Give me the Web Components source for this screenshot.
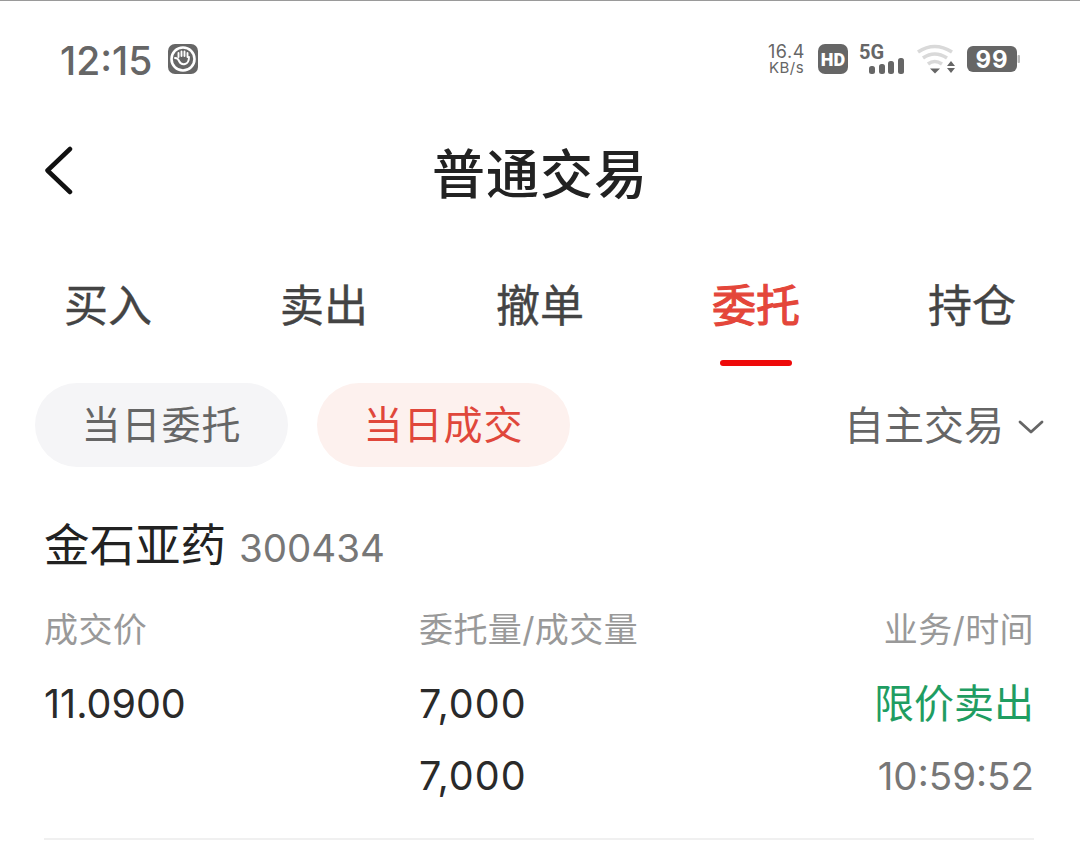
<!DOCTYPE html>
<html lang="zh">
<head>
<meta charset="utf-8">
<title>普通交易</title>
<style>
  html, body { margin: 0; padding: 0; background: #fff; }
  body { width: 1080px; height: 862px; overflow: hidden; font-family: Inter, "Noto Sans CJK SC", sans-serif; }
</style>
</head>
<body>
<trade-page></trade-page>
<script>
// Status bar with clock and the indicator icons
class StatusBar extends HTMLElement {
    constructor() {
        super();
        this.attachShadow({ mode: 'open' });
    }

    connectedCallback() {
        this.shadowRoot.innerHTML = `
            <style>
                :host { display: flex; align-items: center; height: 119px; box-sizing: border-box; padding: 0 60px; border-top: 1px solid #9a9a9a; color: #666; }
                .time { font: 500 39px/1 Inter, sans-serif; }
                .hand { margin: -2px 0 0 16px; }
                .right { margin: -2px 0 0 auto; display: flex; align-items: center; }
                .speed { font: 400 18px/16px Inter, sans-serif; text-align: center; width: 39px; margin-top: 2px; letter-spacing: .6px; }
                .speed div:last-child { font-size: 15px; letter-spacing: .5px; }
                svg { display: block; }
                .hd { margin-left: 12px; }
                .sig { margin-left: 11px; position: relative; width: 45px; height: 30px; }
                .sig span { position: absolute; left: 0; top: 0; font: 700 20px/17px Roboto, sans-serif; }
                .wifi { margin-left: 13px; }
                .bat { margin-left: 12px; }
            </style>
            <span class="time">12:15</span>
            <svg class="hand" width="30" height="30" viewBox="0 0 30 30">
                <rect x="0" y="0" width="30" height="30" rx="7" fill="#666"/>
                <circle cx="15" cy="15" r="11.5" fill="none" stroke="#fff" stroke-width="2.6"/>
                <path d="M10.500 13V9M13.500 12V7.500M16.500 12V7.500M19.500 13V9M7 14q3 0 4 3q2 4 6 3q4-1 4-7" fill="none" stroke="#fff" stroke-width="1.900" stroke-linecap="round"/>
            </svg>
            <div class="right">
                <div class="speed"><div>16.4</div><div>KB/s</div></div>
                <svg class="hd" width="30" height="30" viewBox="0 0 30 30">
                    <rect width="30" height="30" rx="7" fill="#666"/>
                    <text x="15" y="21.500" text-anchor="middle" font-family="Roboto, sans-serif" font-weight="900" font-size="18" fill="#fff">HD</text>
                </svg>
                <div class="sig">
                    <svg width="45" height="30" viewBox="0 0 45 30">
                        <rect x="10" y="22" width="6" height="8" rx="2.500" fill="#666"/>
                        <rect x="20" y="20" width="6" height="10" rx="2.500" fill="#666"/>
                        <rect x="29" y="17" width="6" height="13" rx="2.500" fill="#666"/>
                        <rect x="39" y="14" width="6" height="16" rx="2.500" fill="#666"/>
                    </svg>
                    <span>5G</span>
                </div>
                <svg class="wifi" width="38" height="30" viewBox="0 0 38 30">
                    <path d="M1 8Q17.500 -3 35 8M6 14Q17.500 6 30 14" fill="none" stroke="#d9d9d9" stroke-width="3.600"/>
                    <path d="M11 20Q17.500 15 25 20" fill="none" stroke="#d9d9d9" stroke-width="3.600"/>
                    <path d="M13 24.500h10l-5 5z" fill="#666"/>
                    <path d="M30 22l4-5 4 5zM30 24h8l-4 5z" fill="#666"/>
                </svg>
                <svg class="bat" width="53" height="26" viewBox="0 0 53 26">
                    <rect width="50" height="26" rx="6" fill="#666"/>
                    <rect x="50.500" y="9" width="2.500" height="8" rx="1" fill="#bbb"/>
                    <text x="25" y="21.500" text-anchor="middle" font-family="Inter, sans-serif" font-weight="700" font-size="24" letter-spacing="1" fill="#fff">99</text>
                </svg>
            </div>
        `;
    }
}

// Title row with the back arrow
class NavBar extends HTMLElement {
    constructor() {
        super();
        this.attachShadow({ mode: 'open' });
    }

    connectedCallback() {
        this.shadowRoot.innerHTML = `
            <style>
                :host { display: flex; align-items: center; justify-content: center; height: 110px; position: relative; }
                h1 { margin: -6px 0 0; font: 500 53px/1 "Noto Sans CJK SC", sans-serif; color: #222; letter-spacing: 1px; }
                svg { position: absolute; left: 44px; top: 27px; }
            </style>
            <svg width="30" height="50" viewBox="0 0 30 50">
                <path d="M26 3L3.500 24.500L26 46" fill="none" stroke="#111" stroke-width="4.500" stroke-linecap="round" stroke-linejoin="round"/>
            </svg>
            <h1><slot></slot></h1>
        `;
    }
}

// One tab of the top tab row; "active" gives the red label and underline
class TabItem extends HTMLElement {
    constructor() {
        super();
        this.attachShadow({ mode: 'open' });
    }

    connectedCallback() {
        this.shadowRoot.innerHTML = `
            <style>
                :host { display: flex; flex-direction: column; align-items: center; width: 216px; color: #444; font: 400 44px/62px "Noto Sans CJK SC", sans-serif; -webkit-text-stroke: .4px #444; }
                :host([active]) { color: #e4463a; -webkit-text-stroke: 1.1px #e4463a; }
                .bar { width: 72px; height: 6px; margin-top: 26px; border-radius: 3px; background: transparent; }
                :host([active]) .bar { background: #ee0a0a; }
            </style>
            <span><slot></slot></span>
            <div class="bar"></div>
        `;
    }
}

// Pill filter button
class PillButton extends HTMLElement {
    constructor() {
        super();
        this.attachShadow({ mode: 'open' });
    }

    connectedCallback() {
        this.shadowRoot.innerHTML = `
            <style>
                :host { display: flex; align-items: center; justify-content: center; box-sizing: border-box; width: 253px; height: 84px; padding-bottom: 5px; border-radius: 42px; background: #f5f5f7; color: #666; font: 400 39px/1 "Noto Sans CJK SC", sans-serif; letter-spacing: 1px; }
                :host([active]) { background: #fdf1ee; color: #e0473b; }
            </style>
            <slot></slot>
        `;
    }
}

// Label over value cell of the deal card
class DealColumn extends HTMLElement {
    constructor() {
        super();
        this.attachShadow({ mode: 'open' });
    }

    connectedCallback() {
        this.shadowRoot.innerHTML = `
            <style>
                :host { display: flex; flex-direction: column; color: #2a2a2a; font: 400 39.5px/72px Inter, "Noto Sans CJK SC", sans-serif; }
                :host([right]) { align-items: flex-end; }
                .label { font-size: 34px; line-height: 56px; color: #999; margin-bottom: 10px; letter-spacing: .4px; }
            </style>
            <div class="label"><slot name="label"></slot></div>
            <slot></slot>
        `;
    }
}

class DealCard extends HTMLElement {
    constructor() {
        super();
        this.attachShadow({ mode: 'open' });
    }

    connectedCallback() {
        this.shadowRoot.innerHTML = `
            <style>
                :host { display: block; margin: 0 46px 0 44px; padding-top: 47px; border-bottom: 2px solid #f0f0f0; height: 373px; box-sizing: border-box; }
                .head { display: flex; align-items: baseline; height: 56px; margin-bottom: 32px; }
                .name { font: 400 45.5px/56px "Noto Sans CJK SC", sans-serif; color: #222; }
                .code { font: 400 38.5px/56px Inter, sans-serif; color: #777; margin-left: 13px; }
                .cols { display: grid; grid-template-columns: 375px 1fr auto; }
            </style>
            <div class="head"><span class="name"><slot name="name"></slot></span><span class="code"><slot name="code"></slot></span></div>
            <div class="cols"><slot></slot></div>
        `;
    }
}

class TradePage extends HTMLElement {
    constructor() {
        super();
        this.attachShadow({ mode: 'open' });
    }

    connectedCallback() {
        this.shadowRoot.innerHTML = `
            <style>
                :host { display: block; width: 1080px; height: 862px; overflow: hidden; background: #fff; }
                .tabs { display: flex; margin: 43px 0 0 0; height: 110px; }
                .filters { display: flex; align-items: center; gap: 29px; padding: 0 36px 0 35px; height: 84px; margin-top: 1px; }
                .source { margin-left: auto; display: flex; align-items: center; gap: 14px; color: #666; font: 400 40px/1 "Noto Sans CJK SC", sans-serif; }
                .source span { margin-top: -5px; }
                .source svg { margin-top: 4px; }
                .green { color: #1f9d62; font-family: "Noto Sans CJK SC", sans-serif; font-size: 40px; line-height: 66px; margin-bottom: 6px; }
                .qty { letter-spacing: 1px; }
                .muted { color: #777; font-size: 38.5px; }
            </style>
            <status-bar></status-bar>
            <nav-bar>普通交易</nav-bar>
            <div class="tabs">
                <tab-item>买入</tab-item>
                <tab-item>卖出</tab-item>
                <tab-item>撤单</tab-item>
                <tab-item active>委托</tab-item>
                <tab-item>持仓</tab-item>
            </div>
            <div class="filters">
                <pill-button>当日委托</pill-button>
                <pill-button active>当日成交</pill-button>
                <div class="source"><span>自主交易</span>
                    <svg width="26" height="14" viewBox="0 0 26 14"><path d="M2 2L13 12L24 2" fill="none" stroke="#666" stroke-width="2.800" stroke-linecap="round" stroke-linejoin="round"/></svg>
                </div>
            </div>
            <deal-card>
                <span slot="name">金石亚药</span>
                <span slot="code">300434</span>
                <deal-column><span slot="label">成交价</span><span>11.0900</span></deal-column>
                <deal-column><span slot="label">委托量/成交量</span><span class="qty">7,000</span><span class="qty">7,000</span></deal-column>
                <deal-column right><span slot="label">业务/时间</span><span class="green">限价卖出</span><span class="muted">10:59:52</span></deal-column>
            </deal-card>
        `;
    }
}

customElements.define('status-bar', StatusBar);
customElements.define('nav-bar', NavBar);
customElements.define('tab-item', TabItem);
customElements.define('pill-button', PillButton);
customElements.define('deal-column', DealColumn);
customElements.define('deal-card', DealCard);
customElements.define('trade-page', TradePage);
</script>
</body>
</html>
